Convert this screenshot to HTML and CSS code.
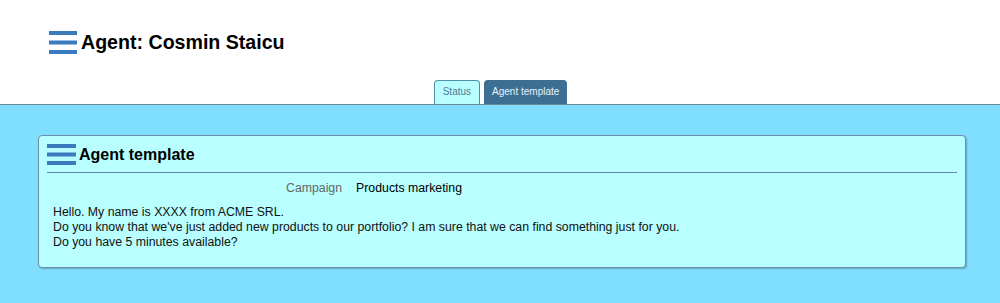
FILE: index.html
```html
<!DOCTYPE html>
<html lang="en">
<head>
  <meta charset="UTF-8">
  <title>Agent: Cosmin Staicu</title>
  <link rel="stylesheet" href="styles.css">
</head>
<body>
  <div class="header">
    <h1 class="title">
      <svg class="menu-icon" width="28" height="23" viewBox="0 0 28 23">
        <rect x="0" y="0" width="28" height="4" fill="#3a7bbf"/>
        <rect x="0" y="9.5" width="28" height="4" fill="#3a7bbf"/>
        <rect x="0" y="19" width="28" height="4" fill="#3a7bbf"/>
      </svg>
      Agent: Cosmin Staicu
    </h1>
    <div class="tabs">
      <a class="tab">Status</a>
      <a class="tab active">Agent template</a>
    </div>
  </div>

  <div class="content">
    <div class="panel">
      <h2 class="panel-title">
        <svg class="menu-icon" width="29" height="21" viewBox="0 0 29 21">
          <rect x="0" y="0" width="29" height="4" fill="#3a7bbf"/>
          <rect x="0" y="8.5" width="29" height="4" fill="#3a7bbf"/>
          <rect x="0" y="17" width="29" height="4" fill="#3a7bbf"/>
        </svg>
        Agent template
      </h2>
      <div class="field">
        <span class="label">Campaign</span>
        <span class="value">Products marketing</span>
      </div>
      <div class="script-text">
        Hello. My name is XXXX from ACME SRL.<br>
        Do you know that we've just added new products to our portfolio? I am sure that we can find something just for you.<br>
        Do you have 5 minutes available?
      </div>
    </div>
  </div>
</body>
</html>
```

FILE: styles.css
```css
* {
  box-sizing: border-box;
}

body {
  margin: 0;
  font-family: 'Liberation Sans', Arial, sans-serif;
  color: #000;
  background: #80dfff;
}

.header {
  background: #fff;
  border-bottom: 1px solid #6f8797;
}

.title {
  display: flex;
  align-items: flex-start;
  gap: 4px;
  margin: 0;
  padding: 31px 0 0 49px;
  font-size: 19.6px;
  font-weight: bold;
  height: 80px;
}

.tabs {
  display: flex;
  justify-content: center;
  gap: 4px;
  padding-left: 1px;
}

.tab {
  display: block;
  height: 24px;
  line-height: 22px;
  padding: 0 8px;
  font-size: 10px;
  color: #4d7a94;
  background: #b9ffff;
  border: 1px solid #4f8fae;
  border-bottom: none;
  border-radius: 4px 4px 0 0;
}

.tab.active {
  background: #3d6f95;
  border-color: #3d6f95;
  color: #e6f2fa;
  padding: 0 7px;
}

.content {
  padding: 30px 34px 36px 38px;
}

.panel {
  background: #b9ffff;
  border: 1px solid #6d8ea6;
  border-radius: 4px;
  box-shadow: 1px 1px 2px rgba(0, 0, 0, 0.25);
  padding: 8px 8px 17px 8px;
}

.panel-title {
  display: flex;
  align-items: center;
  gap: 3px;
  margin: 0;
  padding-bottom: 7px;
  font-size: 16px;
  font-weight: bold;
  border-bottom: 1px solid #5f88a6;
}

.field {
  display: flex;
  gap: 14px;
  padding: 8px 0 10px 239px;
  font-size: 12.3px;
}

.label {
  color: #666;
}

.script-text {
  padding-left: 6px;
  font-size: 12.3px;
  line-height: 15px;
  color: #111;
}
```
